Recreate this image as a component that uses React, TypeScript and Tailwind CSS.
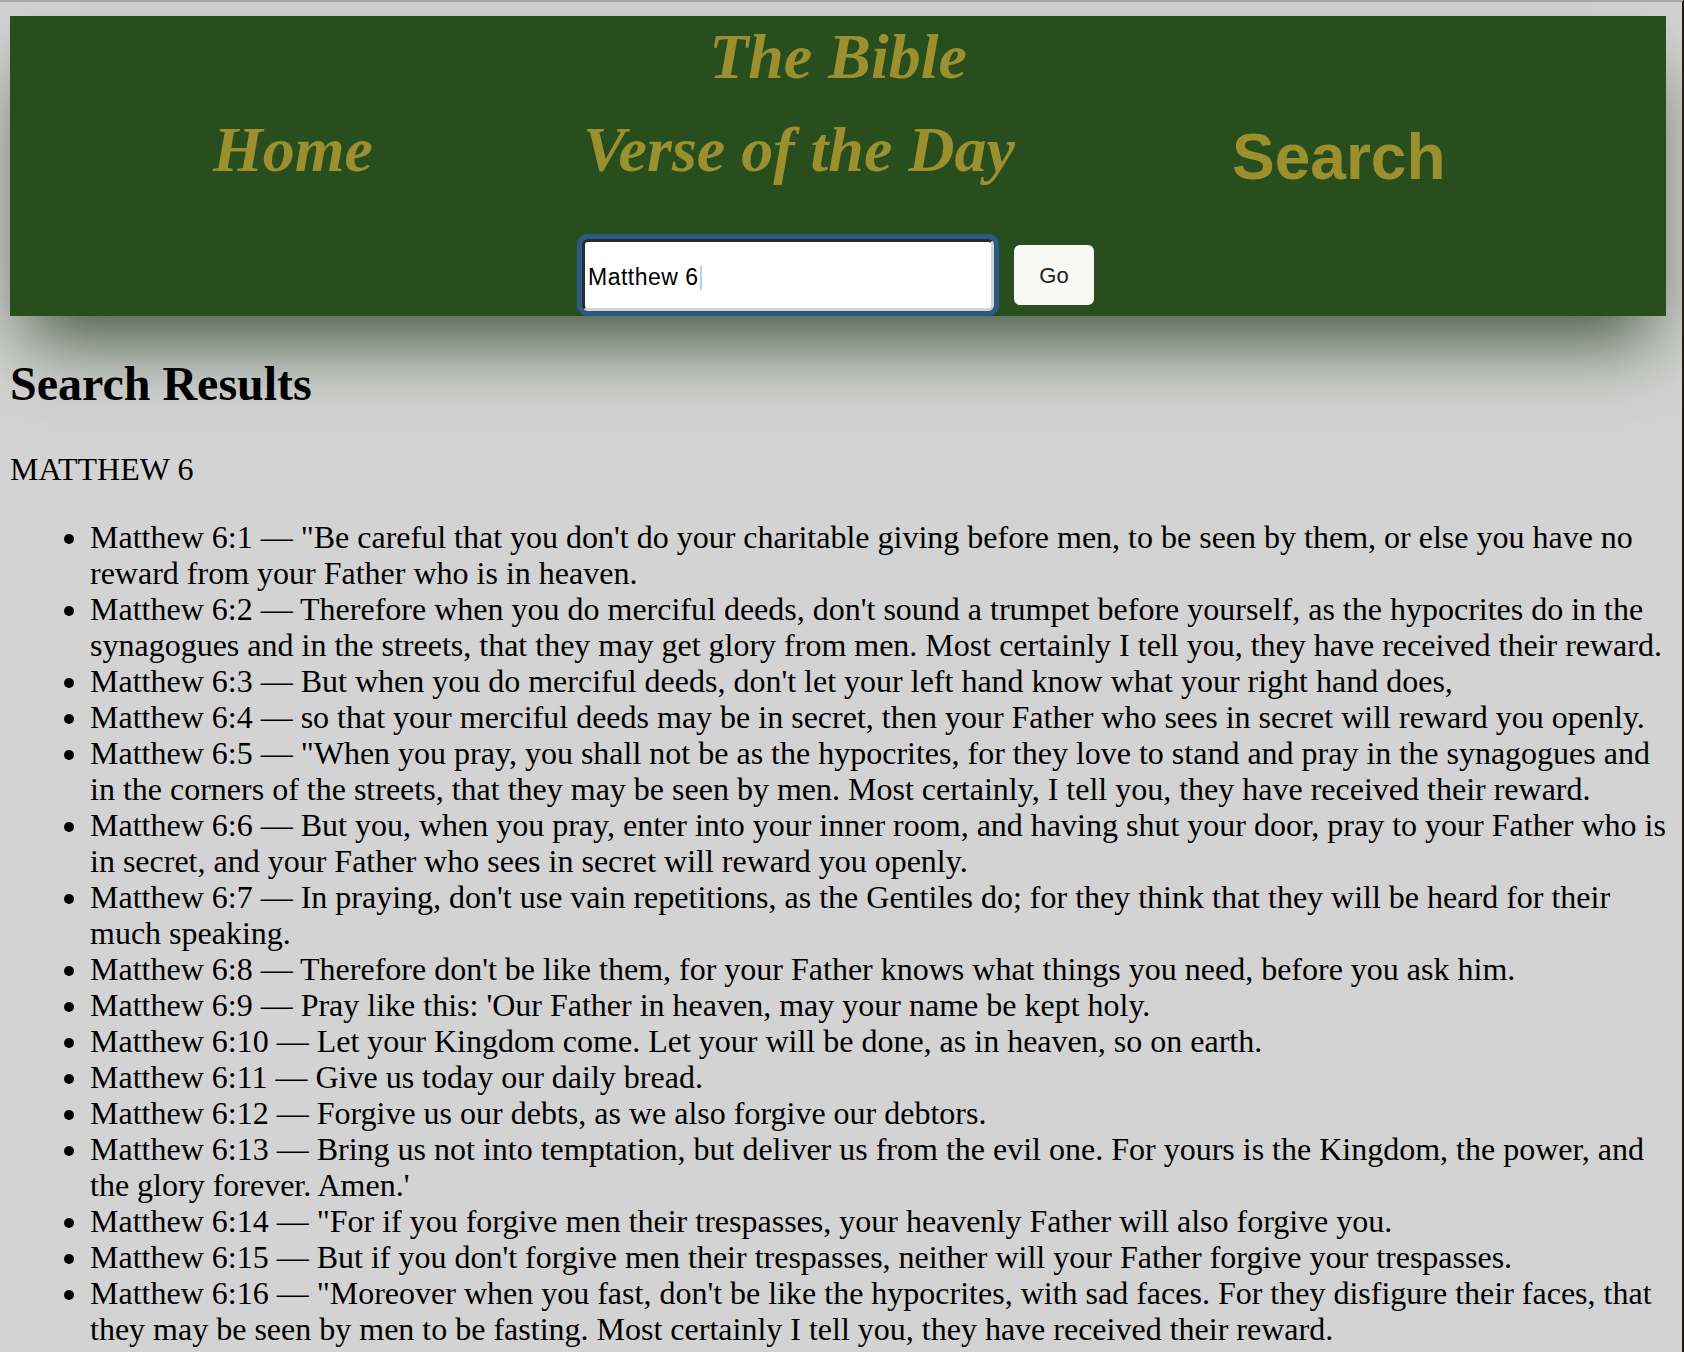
import React from 'react';

interface Verse {
  ref: string;
  text: string;
}

const verses: Verse[] = [
  { ref: 'Matthew 6:1', text: '"Be careful that you don\'t do your charitable giving before men, to be seen by them, or else you have no reward from your Father who is in heaven.' },
  { ref: 'Matthew 6:2', text: 'Therefore when you do merciful deeds, don\'t sound a trumpet before yourself, as the hypocrites do in the synagogues and in the streets, that they may get glory from men. Most certainly I tell you, they have received their reward.' },
  { ref: 'Matthew 6:3', text: 'But when you do merciful deeds, don\'t let your left hand know what your right hand does,' },
  { ref: 'Matthew 6:4', text: 'so that your merciful deeds may be in secret, then your Father who sees in secret will reward you openly.' },
  { ref: 'Matthew 6:5', text: '"When you pray, you shall not be as the hypocrites, for they love to stand and pray in the synagogues and in the corners of the streets, that they may be seen by men. Most certainly, I tell you, they have received their reward.' },
  { ref: 'Matthew 6:6', text: 'But you, when you pray, enter into your inner room, and having shut your door, pray to your Father who is in secret, and your Father who sees in secret will reward you openly.' },
  { ref: 'Matthew 6:7', text: 'In praying, don\'t use vain repetitions, as the Gentiles do; for they think that they will be heard for their much speaking.' },
  { ref: 'Matthew 6:8', text: 'Therefore don\'t be like them, for your Father knows what things you need, before you ask him.' },
  { ref: 'Matthew 6:9', text: 'Pray like this: \'Our Father in heaven, may your name be kept holy.' },
  { ref: 'Matthew 6:10', text: 'Let your Kingdom come. Let your will be done, as in heaven, so on earth.' },
  { ref: 'Matthew 6:11', text: 'Give us today our daily bread.' },
  { ref: 'Matthew 6:12', text: 'Forgive us our debts, as we also forgive our debtors.' },
  { ref: 'Matthew 6:13', text: 'Bring us not into temptation, but deliver us from the evil one. For yours is the Kingdom, the power, and the glory forever. Amen.\'' },
  { ref: 'Matthew 6:14', text: '"For if you forgive men their trespasses, your heavenly Father will also forgive you.' },
  { ref: 'Matthew 6:15', text: 'But if you don\'t forgive men their trespasses, neither will your Father forgive your trespasses.' },
  { ref: 'Matthew 6:16', text: '"Moreover when you fast, don\'t be like the hypocrites, with sad faces. For they disfigure their faces, that they may be seen by men to be fasting. Most certainly I tell you, they have received their reward.' },
];

export default function App() {
  return (
    <div className="min-h-screen bg-[#d3d3d3] border-t-2 border-t-[#a9a9a9] border-r-2 border-r-[#211a13] pl-[10px] pr-[16px] pb-4 font-['Liberation_Serif',serif] text-black">
      {/* Header */}
      <header className="mt-[14px] bg-[#284e1e] pt-[5px] pb-[5px] shadow-[0_40px_70px_-15px_rgba(40,66,34,0.85)]">
        <h1 className="text-center text-[64px] leading-[72px] font-bold italic text-[#9c8f2e]">
          The Bible
        </h1>

        <nav className="mt-[21px] flex items-start pl-[203px] text-[64px] leading-[72px] text-[#9c8f2e]">
          <a className="w-[370px] shrink-0 font-bold italic">Home</a>
          <a className="w-[649px] shrink-0 font-bold italic">Verse of the Day</a>
          <a className="mt-[7px] shrink-0 font-['Liberation_Sans',Arial,sans-serif] font-bold">Search</a>
        </nav>

        <div className="mt-[46px] flex items-center justify-center">
          <div className="flex h-[72px] w-[412px] items-center rounded-[6px] border-[3px] border-t-[#2a2a2a] border-l-[#2a2a2a] border-r-[#d6d6d6] border-b-[#d4d4d4] bg-white pl-[3px] pt-[5px] ring-[5px] ring-[#2b5a88] font-['Liberation_Sans',Arial,sans-serif] text-[23px] tracking-[0.5px] text-black">
            <span>Matthew 6</span>
            <span className="ml-[1px] h-[24px] w-[2px] bg-[#b8cff5]" />
          </div>
          <button className="ml-[20px] h-[60px] w-[80px] rounded-[6px] bg-[#f8f8f5] font-['Liberation_Sans',Arial,sans-serif] text-[22px] text-[#222]">
            Go
          </button>
        </div>
      </header>

      {/* Results */}
      <h2 className="mt-[41px] text-[48px] leading-[53px] font-bold">Search Results</h2>
      <p className="mt-[41px] text-[32px] leading-[36px]">MATTHEW 6</p>
      <ul className="mt-[32px] list-disc pl-[80px] text-[32px] leading-[36px]">
        {verses.map((v) => (
          <li key={v.ref}>
            {v.ref} — {v.text}
          </li>
        ))}
      </ul>
    </div>
  );
}
